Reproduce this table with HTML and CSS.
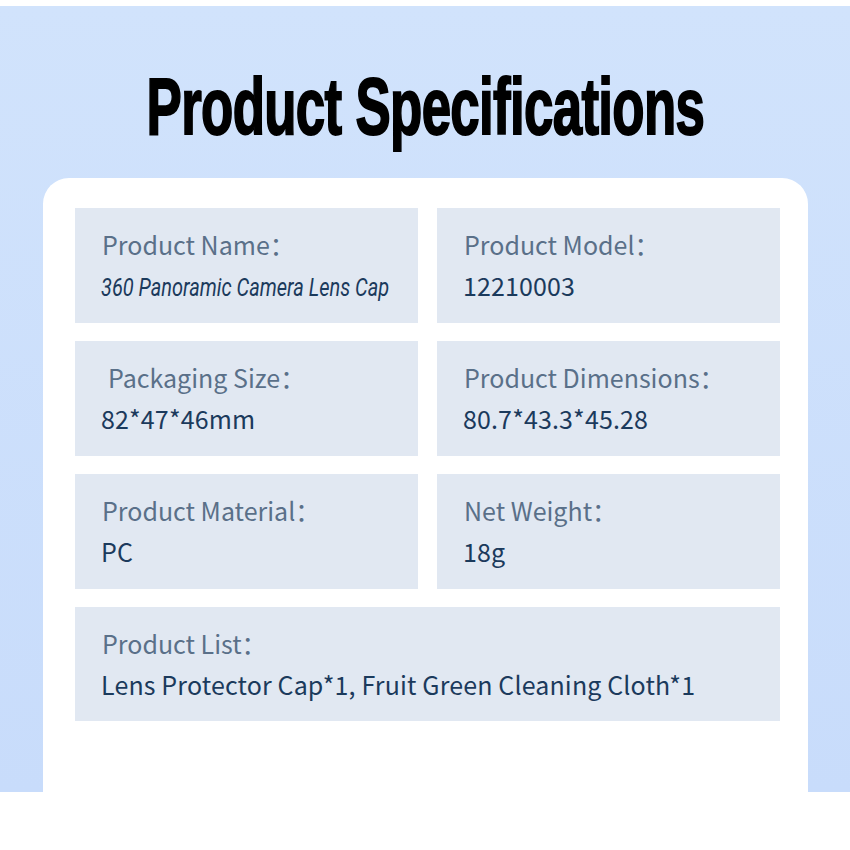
FILE: index.html
```html
<!DOCTYPE html>
<html>
<head>
<meta charset="utf-8">
<link rel="stylesheet" href="styles.css">
</head>
<body>
<div class="page">
  <header class="hero">
    <h1 class="title"><span class="title-text">Product Specifications</span></h1>
  </header>
  <section class="card">
    <div class="grid">
      <div class="cell">
        <div class="label">Product Name：</div>
        <div class="value"><span class="italic">360 Panoramic Camera Lens Cap</span></div>
      </div>
      <div class="cell">
        <div class="label">Product Model：</div>
        <div class="value">12210003</div>
      </div>
      <div class="cell">
        <div class="label indent">Packaging Size：</div>
        <div class="value">82*47*46mm</div>
      </div>
      <div class="cell">
        <div class="label">Product Dimensions：</div>
        <div class="value">80.7*43.3*45.28</div>
      </div>
      <div class="cell">
        <div class="label">Product Material：</div>
        <div class="value">PC</div>
      </div>
      <div class="cell">
        <div class="label">Net Weight：</div>
        <div class="value">18g</div>
      </div>
      <div class="cell wide">
        <div class="label">Product List：</div>
        <div class="value">Lens Protector Cap*1, Fruit Green Cleaning Cloth*1</div>
      </div>
    </div>
  </section>
</div>
</body>
</html>
```
FILE: styles.css
```css
html, body {
  margin: 0;
  padding: 0;
  background: #ffffff;
}
.page {
  width: 850px;
  height: 850px;
  overflow: hidden;
  display: flex;
  flex-direction: column;
  align-items: center;
  background:
    linear-gradient(to bottom,
      #ffffff 0, #ffffff 6px,
      #d1e3fc 6px, #c8dcfb 792px,
      #ffffff 792px, #ffffff 850px);
}
.hero {
  height: 178px;
  flex: none;
  display: flex;
  align-items: flex-start;
  justify-content: center;
  padding-top: 6px;
  box-sizing: border-box;
}
.title {
  margin: 56px 0 0 0;
  font-family: "Liberation Sans", sans-serif;
  font-weight: 700;
  font-size: 80px;
  line-height: 90px;
  color: #000;
  letter-spacing: -1px;
}
.title-text {
  display: inline-block;
  transform: scaleX(0.66);
  -webkit-text-stroke: 2px #000;
  white-space: nowrap;
}
.card {
  width: 765px;
  flex: 1;
  background: #ffffff;
  border-radius: 26px 26px 0 0;
  padding: 30px 29px 0 32px;
  box-sizing: border-box;
  margin-left: 1px;
}
.grid {
  display: grid;
  grid-template-columns: 343px 343px;
  column-gap: 19px;
  row-gap: 18px;
}
.cell {
  height: 115px;
  background: #e1e8f2;
  padding: 20px 0 0 27px;
  box-sizing: border-box;
  font-family: "Noto Sans CJK SC", "Noto Sans", sans-serif;
}
.cell.wide {
  grid-column: 1 / span 2;
  height: 114px;
}
.label {
  font-size: 25px;
  line-height: 32px;
  color: #5a7089;
  letter-spacing: 0;
}
.label.indent {
  padding-left: 6px;
}
.value {
  margin-top: 9px;
  font-size: 25px;
  line-height: 32px;
  color: #1b3a5c;
  margin-left: -1px;
  letter-spacing: 0.14px;
  white-space: nowrap;
}
.italic {
  display: inline-block;
  font-family: Roboto, "Liberation Sans", sans-serif;
  font-style: italic;
  font-weight: 400;
  font-size: 25px;
  letter-spacing: 0;
  transform: scaleX(0.8);
  transform-origin: left center;
}
```
